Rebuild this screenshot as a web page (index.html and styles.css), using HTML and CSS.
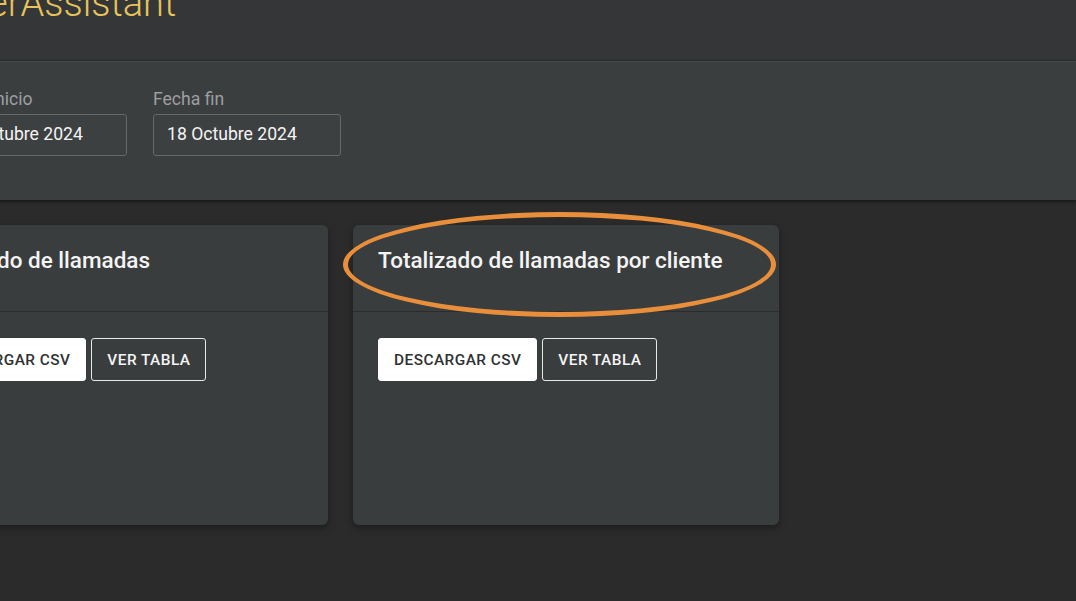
FILE: index.html
```html
<!DOCTYPE html>
<html lang="es">
<head>
<meta charset="utf-8">
<title>Assistant</title>
<link rel="stylesheet" href="styles.css">
</head>
<body>
<div class="page">
  <header class="topbar">
    <h1 class="brand">erAssistant</h1>
  </header>
  <section class="filters">
    <div class="field">
      <label class="field-label">Fecha inicio</label>
      <div class="field-input">18 Octubre 2024</div>
    </div>
    <div class="field">
      <label class="field-label">Fecha fin</label>
      <div class="field-input">18 Octubre 2024</div>
    </div>
  </section>
  <main class="cards">
    <article class="card">
      <div class="card-head"><h2 class="card-title">Detallado de llamadas</h2></div>
      <div class="card-body">
        <button class="btn btn-solid">DESCARGAR CSV</button>
        <button class="btn btn-outline">VER TABLA</button>
      </div>
    </article>
    <article class="card">
      <div class="card-head"><h2 class="card-title">Totalizado de llamadas por cliente</h2></div>
      <div class="card-body">
        <button class="btn btn-solid">DESCARGAR CSV</button>
        <button class="btn btn-outline">VER TABLA</button>
      </div>
      <div class="highlight"></div>
    </article>
  </main>
</div>
</body>
</html>
```

FILE: styles.css
```css
* { box-sizing: border-box; }

html, body {
  margin: 0;
  padding: 0;
  height: 100%;
}

body {
  background: #2b2b2b;
  font-family: Roboto, "Noto Sans", "Liberation Sans", sans-serif;
  overflow: hidden;
}

.page {
  margin-left: -121px;
  width: calc(100% + 121px);
}

.topbar {
  height: 61px;
  background: #343637;
  border-bottom: 1px solid #27292a;
  overflow: hidden;
  padding-left: 109px;
}

.brand {
  margin: -16px 0 0 0;
  font-size: 38px;
  line-height: 38px;
  font-weight: 300;
  color: #e6c45a;
  white-space: nowrap;
}

.filters {
  height: 139px;
  background: #3b3e3f;
  border-top: 1px solid #484b4c;
  box-shadow: 0 2px 3px rgba(0, 0, 0, 0.45);
  display: flex;
  gap: 26px;
  padding: 26px 0 0 60px;
  position: relative;
}

.field {
  display: flex;
  flex-direction: column;
  width: 188px;
}

.field-label {
  font-size: 17.6px;
  line-height: 22px;
  color: #9d9fa0;
  margin-bottom: 4px;
  white-space: nowrap;
}

.field-input {
  height: 42px;
  border: 1px solid #66696b;
  border-radius: 3px;
  background: #3d4041;
  color: #f4f4f4;
  font-size: 17.6px;
  line-height: 39px;
  padding-left: 13px;
  white-space: nowrap;
}

.cards {
  display: flex;
  gap: 24px;
  padding: 25px 0 0 23px;
}

.card {
  position: relative;
  width: 426px;
  height: 300px;
  flex: none;
  background: #3a3d3e;
  border-radius: 6px;
  box-shadow: 0 3px 7px rgba(0, 0, 0, 0.35);
}

.card + .card {
  margin-left: 1px;
}

.card-head {
  height: 87px;
  padding: 22px 25px 0;
  border-bottom: 1px solid #2a2c2d;
}

.card-title {
  margin: 0;
  font-size: 22.5px;
  line-height: 26px;
  font-weight: 500;
  color: #f4f4f4;
  white-space: nowrap;
}

.card-body {
  display: flex;
  gap: 5px;
  padding: 26px 25px;
}

.btn {
  height: 43px;
  padding: 0 15px;
  border-radius: 3px;
  font-family: inherit;
  font-size: 15.4px;
  font-weight: 500;
  letter-spacing: 0.45px;
  cursor: pointer;
}

.btn-solid {
  background: #ffffff;
  color: #2f3132;
  border: 1px solid #ffffff;
}

.btn-outline {
  background: transparent;
  color: #f4f4f4;
  border: 1px solid #e8e8e8;
}

.highlight {
  position: absolute;
  left: -10px;
  top: -13px;
  width: 433px;
  height: 105px;
  border: 5px solid #e98f3b;
  border-radius: 50%;
  pointer-events: none;
}
```
